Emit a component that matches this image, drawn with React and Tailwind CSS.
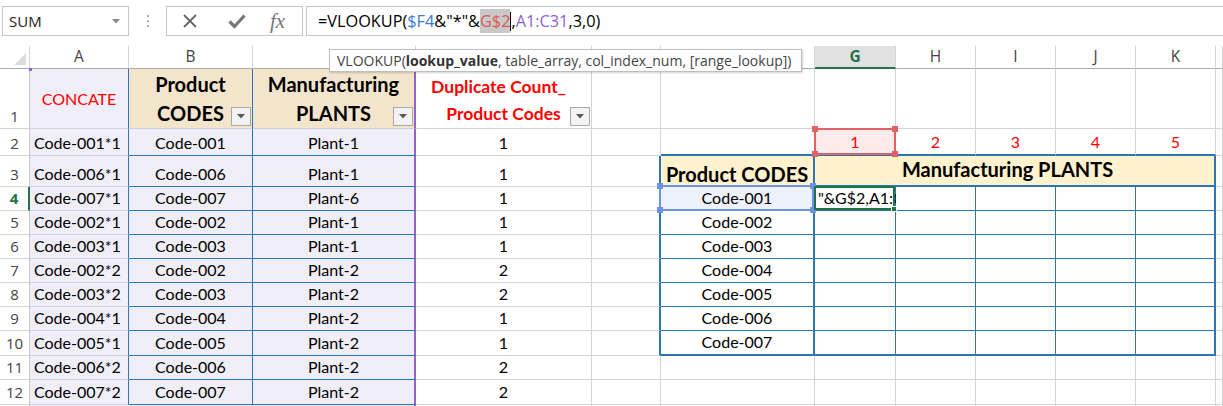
import React from 'react';

const A_VALS = ['Code-001*1','Code-006*1','Code-007*1','Code-002*1','Code-003*1','Code-002*2','Code-003*2','Code-004*1','Code-005*1','Code-006*2','Code-007*2'];
const B_VALS = ['Code-001','Code-006','Code-007','Code-002','Code-003','Code-002','Code-003','Code-004','Code-005','Code-006','Code-007'];
const C_VALS = ['Plant-1','Plant-1','Plant-6','Plant-1','Plant-1','Plant-2','Plant-2','Plant-2','Plant-2','Plant-2','Plant-2'];
const D_VALS = ['1','1','1','1','1','2','2','1','1','2','2'];
const F_VALS = ['Code-001','Code-002','Code-003','Code-004','Code-005','Code-006','Code-007'];
const LETTERS = ['A','B','C','D','E','F','G','H','I','J','K',''];

function rightB(r, c) {
  if (c === 3 && r >= 1) return 'border-r-2 border-r-[#9163cb]';
  if ((c === 1 || c === 2) && r >= 1 && r <= 12) return 'border-r border-r-[#2e75b6]';
  if ((c === 5 || c === 6 || c === 11) && r >= 3 && r <= 10) return 'border-r-2 border-r-[#2e75b6]';
  if (c >= 7 && c <= 10 && r >= 4 && r <= 10) return 'border-r border-r-[#2e75b6]';
  return 'border-r border-r-[#d4d4d4]';
}

function bottomB(r, c) {
  if (r === 2 && c >= 6 && c <= 11) return 'border-b-2 border-b-[#2e75b6]';
  if ((r === 3 || r === 10) && c >= 6 && c <= 11) return 'border-b-2 border-b-[#2e75b6]';
  if (r >= 4 && r <= 9 && c >= 6 && c <= 11) return 'border-b border-b-[#2e75b6]';
  if ((c === 2 || c === 3) && r >= 2 && r <= 12) return 'border-b border-b-[#2e75b6]';
  if ((c === 2 || c === 3) && r === 1) return 'border-b border-b-[#c8cde0]';
  if (c === 1 && r <= 12) return 'border-b border-b-[#d2d0de]';
  return 'border-b border-b-[#d4d4d4]';
}

function bgOf(r, c) {
  if (r === 1 && (c === 2 || c === 3)) return 'bg-[#f3e4cc]';
  if (c >= 1 && c <= 3 && r >= 1) return 'bg-[#f0eef8]';
  if (r === 3 && c >= 6 && c <= 11) return 'bg-[#fff2cc]';
  if (r === 2 && c === 7) return 'bg-[#fdeaea]';
  if (r === 4 && c === 6) return 'bg-[#edf2fc]';
  return 'bg-white';
}

function FilterBtn() {
  return (
    <div className="absolute right-[1px] bottom-[2px] w-[20px] h-[19px] border border-[#a8a8a8] bg-[#f3f3f3] flex items-center justify-center">
      <svg width="8" height="5" viewBox="0 0 8 5"><path d="M0 0 L8 0 L4 4.5 Z" fill="#5a5a5a" /></svg>
    </div>
  );
}

function Handle({ pos, color }) {
  return <div className={`absolute w-[6px] h-[6px] ${pos} ${color}`} />;
}

function cellContent(r, c) {
  const base = 'items-end pb-[2px]';
  if (r === 1) {
    if (c === 1) return ['items-center justify-center', <span className="text-[#ff0000] text-[16px]">CONCATE</span>];
    if (c === 2) return ['flex-col items-center justify-center pt-[1px]', <>
      <span className="text-[20px] font-bold leading-[29px] text-black">Product</span>
      <span className="text-[20px] font-bold leading-[29px] text-black">CODES</span>
      <FilterBtn />
    </>];
    if (c === 3) return ['flex-col items-center justify-center pt-[1px]', <>
      <span className="text-[20px] font-bold leading-[29px] text-black">Manufacturing</span>
      <span className="text-[20px] font-bold leading-[29px] text-black">PLANTS</span>
      <FilterBtn />
    </>];
    if (c === 4) return ['flex-col items-center justify-center pt-[2px]', <>
      <span className="text-[17.5px] font-bold leading-[27px] text-[#ff0000] pr-[10px]">Duplicate Count_</span>
      <span className="text-[17.5px] font-bold leading-[27px] text-[#ff0000]">Product Codes</span>
      <FilterBtn />
    </>];
    return [base, null];
  }
  if (r >= 2 && r <= 12) {
    const i = r - 2;
    if (c === 1) return [base + ' justify-start pl-[4px]', A_VALS[i]];
    if (c === 2) return [base + ' justify-center', B_VALS[i]];
    if (c === 3) return [base + ' justify-center', C_VALS[i]];
    if (c === 4) return [base + ' justify-center', D_VALS[i]];
  }
  if (r === 2 && c >= 7 && c <= 11) {
    const extra = c === 7 ? (
      <div className="absolute -left-[1px] -top-[1px] -right-[1px] -bottom-[1px] border-2 border-[#e06262] z-10">
        <Handle pos="-left-[4px] -top-[4px]" color="bg-[#e06262]" />
        <Handle pos="-right-[4px] -top-[4px]" color="bg-[#e06262]" />
        <Handle pos="-left-[4px] -bottom-[4px]" color="bg-[#e06262]" />
        <Handle pos="-right-[4px] -bottom-[4px]" color="bg-[#e06262]" />
      </div>
    ) : null;
    return [base + ' justify-center', <><span className="text-[#ff0000]">{c - 6}</span>{extra}</>];
  }
  if (r === 3 && c === 6) return ['items-end pb-[1px] justify-center', <span className="text-[20px] font-bold text-black">Product CODES</span>];
  if (r >= 4 && r <= 10 && c === 6) {
    const extra = r === 4 ? (
      <div className="absolute -left-[2px] -top-[2px] -right-[1px] -bottom-[1px] border-2 border-[#6b93e6] z-10">
        <Handle pos="-left-[4px] -top-[4px]" color="bg-[#6b93e6]" />
        <Handle pos="-right-[4px] -top-[4px]" color="bg-[#6b93e6]" />
        <Handle pos="-left-[4px] -bottom-[4px]" color="bg-[#6b93e6]" />
        <Handle pos="-right-[4px] -bottom-[4px]" color="bg-[#6b93e6]" />
      </div>
    ) : null;
    return [base + ' justify-center', <><span>{F_VALS[r - 4]}</span>{extra}</>];
  }
  if (r === 4 && c === 7) {
    return [base + ' justify-start pl-[3px]', <>
      <span className="whitespace-nowrap">"&amp;G$2,A1:C31,3,0)</span>
      <div className="absolute -left-[1px] -top-[1px] right-0 bottom-0 border-2 border-[#217346] z-10">
        <div className="absolute -right-[4px] -bottom-[4px] w-[6px] h-[6px] bg-[#217346] border border-white" />
      </div>
    </>];
  }
  return [base, null];
}

function Sheet() {
  const cells = [];
  cells.push(
    <div key="corner" className="relative bg-white border-r border-r-[#d4d4d4] border-b border-b-[#ababab]">
      <svg className="absolute right-[3px] bottom-[3px]" width="12" height="12" viewBox="0 0 12 12"><path d="M12 0 L12 12 L0 12 Z" fill="#dcdcdc" /></svg>
    </div>
  );
  for (let c = 1; c <= 12; c++) {
    const sel = c === 7;
    cells.push(
      <div
        key={`h${c}`}
        className={sel
          ? 'flex items-center justify-center bg-[#e1e1e1] border-r border-r-[#d4d4d4] border-b-2 border-b-[#217346] text-[#217346] font-bold text-[15.5px] font-[\'Open_Sans\',sans-serif]'
          : 'flex items-center justify-center bg-white border-r border-r-[#d4d4d4] border-b border-b-[#ababab] text-[#444] text-[15.5px] font-[\'Open_Sans\',sans-serif]'}
      >
        {LETTERS[c - 1]}
      </div>
    );
  }
  for (let r = 1; r <= 13; r++) {
    const selRow = r === 4;
    cells.push(
      <div
        key={`rh${r}`}
        className={selRow
          ? 'flex items-end justify-center pb-[1px] bg-white border-r-2 border-r-[#217346] border-b border-b-[#d4d4d4] text-[#217346] font-bold text-[15px] font-[\'Open_Sans\',sans-serif]'
          : 'flex items-end justify-center pb-[1px] bg-white border-r border-r-[#c6c6c6] border-b border-b-[#d4d4d4] text-[#444] text-[15px] font-[\'Open_Sans\',sans-serif]'}
      >
        {r <= 12 ? r : null}
      </div>
    );
    for (let c = 1; c <= 12; c++) {
      if (r === 3 && c >= 8 && c <= 11) continue;
      if (r === 3 && c === 7) {
        cells.push(
          <div key={`c${r}-${c}`} className="col-span-5 flex items-end justify-center pb-[1px] bg-[#fff2cc] border-r-2 border-r-[#2e75b6] border-b-2 border-b-[#2e75b6]">
            <span className="text-[20px] font-bold text-black pr-[14px]">Manufacturing PLANTS</span>
          </div>
        );
        continue;
      }
      const [align, content] = cellContent(r, c);
      cells.push(
        <div
          key={`c${r}-${c}`}
          className={`relative flex ${align} ${rightB(r, c)} ${bottomB(r, c)} ${bgOf(r, c)} text-[16px] text-black leading-[20px]`}
        >
          {content}
          {r === 1 && c === 1 ? <div className="absolute -left-[1px] -top-[1px] w-[3px] h-[3px] bg-[#9163cb]" /> : null}
        </div>
      );
    }
  }
  return (
    <div className="grid grid-cols-[30px_99px_124px_163px_176px_69px_154px_81px_80px_80px_80px_80px_1fr] grid-rows-[23px_60px_27px_31px_24px_24px_24px_24px_24px_24px_25px_24px_25px_24px]">
      {cells}
    </div>
  );
}

function FormulaBar() {
  return (
    <div className="h-[46px] pt-[6px] flex items-start font-['Open_Sans',sans-serif]">
      <div className="ml-[2px] w-[127px] h-[30px] border border-[#c6c6c6] flex items-center justify-between pl-[6px] pr-[8px]">
        <span className="text-[15px] text-[#222]">SUM</span>
        <svg width="8" height="5" viewBox="0 0 8 5"><path d="M0 0 L8 0 L4 4.5 Z" fill="#888" /></svg>
      </div>
      <div className="w-[37px] h-[30px] flex flex-col items-center justify-center gap-[3px]">
        <div className="w-[2px] h-[2px] bg-[#b0b0b0]" />
        <div className="w-[2px] h-[2px] bg-[#b0b0b0]" />
        <div className="w-[2px] h-[2px] bg-[#b0b0b0]" />
      </div>
      <div className="w-[137px] h-[30px] border border-[#c6c6c6] flex items-center pl-[15px]">
        <svg width="16" height="16" viewBox="0 0 16 16"><path d="M2 2 L14 14 M14 2 L2 14" stroke="#666" strokeWidth="1.8" /></svg>
        <svg className="ml-[30px]" width="18" height="16" viewBox="0 0 18 16"><path d="M1.5 8.5 L6.5 13.5 L16.5 2.5" stroke="#777" strokeWidth="3.2" fill="none" /></svg>
        <span className="ml-[24px] text-[21px] italic text-[#777] font-['Liberation_Serif',serif] leading-none">fx</span>
      </div>
      <div className="ml-[3px] flex-1 h-[30px] border border-r-0 border-[#c6c6c6] flex items-center pl-[11px] text-[16.3px] text-black whitespace-nowrap">
        <span>=VLOOKUP(</span>
        <span className="text-[#3d78d8]">$F4</span>
        <span>&amp;"*"&amp;</span>
        <span className="text-[#e05555] bg-[#c8c8c8]">G$2</span>
        <span className="w-[1px] h-[19px] bg-black" />
        <span>,</span>
        <span className="text-[#8e5fcf]">A1:C31</span>
        <span>,3,0)</span>
      </div>
    </div>
  );
}

function Tooltip() {
  return (
    <div className="absolute left-[329px] top-[49px] w-[473px] h-[23px] bg-white border border-[#bebebe] shadow-[1px_1px_2px_rgba(0,0,0,0.18)] flex items-center pl-[7px] text-[14px] text-[#444] whitespace-nowrap font-['Open_Sans',sans-serif] z-20">
      VLOOKUP(<span className="font-bold text-[#333]">lookup_value</span>, table_array, col_index_num, [range_lookup])
    </div>
  );
}

export default function App() {
  return (
    <div className="relative w-[1223px] h-[406px] overflow-hidden bg-white font-['Lato',sans-serif]">
      <FormulaBar />
      <Sheet />
      <Tooltip />
    </div>
  );
}
